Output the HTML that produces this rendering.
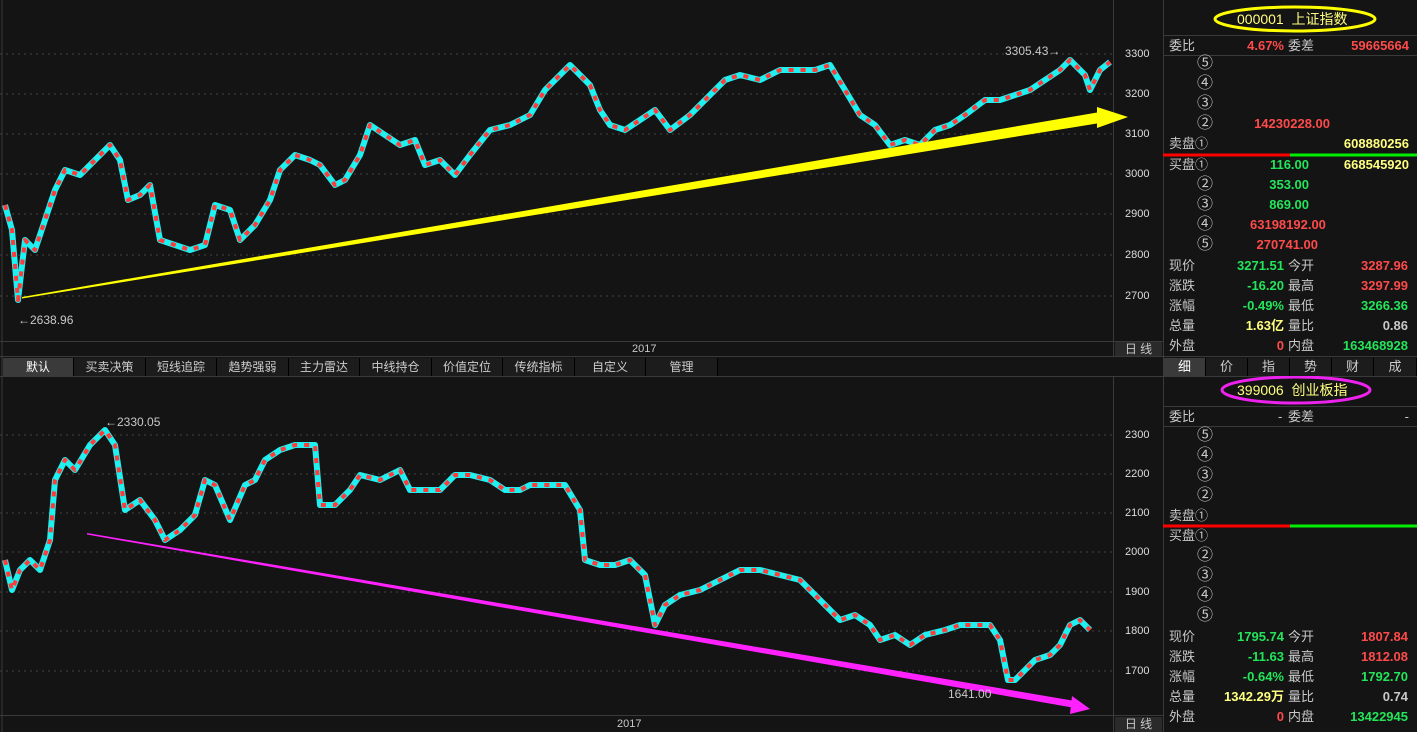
<!DOCTYPE html>
<html><head><meta charset="utf-8"><style>
*{margin:0;padding:0;box-sizing:border-box}
body{width:1417px;height:732px;background:#141414;overflow:hidden;position:relative;font-family:"Liberation Sans","Noto Sans CJK SC",sans-serif;font-size:13px;color:#c8c8c8}
.a{position:absolute;white-space:nowrap;line-height:16px}
.c{font-size:16px;line-height:18px;margin-top:-1px}
.r{color:#ff4a4a}.g{color:#22e55a}.y{color:#ffff80}.w{color:#c8c8c8}
.tab{position:absolute;top:358px;height:18px;line-height:18px;text-align:center;color:#ccc;border-right:1px solid #000;background:#1c1c1c;font-size:12px}
.rt{position:absolute;height:18px;line-height:18px;text-align:center;color:#ccc;border-right:1px solid #000;background:#1c1c1c;font-size:13px}
.ax{position:absolute;left:1125px;color:#ddd;font-size:11px;line-height:12px}
</style></head><body>
<svg width="1417" height="732" style="position:absolute;left:0;top:0">
<g stroke="#444" stroke-dasharray="2,4" stroke-width="1">
<line x1="0" y1="54" x2="1113" y2="54"/><line x1="0" y1="94" x2="1113" y2="94"/><line x1="0" y1="134" x2="1113" y2="134"/><line x1="0" y1="174" x2="1113" y2="174"/><line x1="0" y1="214" x2="1113" y2="214"/><line x1="0" y1="255" x2="1113" y2="255"/><line x1="0" y1="296" x2="1113" y2="296"/>
<line x1="0" y1="435" x2="1113" y2="435"/><line x1="0" y1="474" x2="1113" y2="474"/><line x1="0" y1="513" x2="1113" y2="513"/><line x1="0" y1="552" x2="1113" y2="552"/><line x1="0" y1="592" x2="1113" y2="592"/><line x1="0" y1="631" x2="1113" y2="631"/><line x1="0" y1="671" x2="1113" y2="671"/>
</g>
<g stroke="#3a3a3a" stroke-width="1" fill="none">
<line x1="2" y1="0" x2="2" y2="732"/>
<line x1="1113.5" y1="0" x2="1113.5" y2="356"/><line x1="1113.5" y1="377" x2="1113.5" y2="732"/>
<line x1="1163.5" y1="0" x2="1163.5" y2="732"/>
<line x1="0" y1="341.5" x2="1163" y2="341.5"/><line x1="0" y1="356.5" x2="1417" y2="356.5"/><line x1="0" y1="376.5" x2="1417" y2="376.5"/>
<line x1="0" y1="715.5" x2="1163" y2="715.5"/>
<line x1="1163" y1="35.5" x2="1417" y2="35.5"/><line x1="1163" y1="55.5" x2="1417" y2="55.5"/><line x1="1163" y1="406.5" x2="1417" y2="406.5"/><line x1="1163" y1="426.5" x2="1417" y2="426.5"/>
</g>
<g fill="none" stroke-linejoin="round">
<polyline stroke="#20f0f0" stroke-width="6" points="5,205 12,230 18,300 25,240 35,250 45,220 55,190 65,170 80,175 95,160 110,145 120,160 128,200 140,195 150,185 160,240 175,245 190,250 205,245 215,205 230,210 240,240 255,225 270,200 280,170 295,155 310,160 320,165 335,185 345,180 360,155 370,125 385,135 400,145 415,140 425,165 440,160 455,175 470,155 490,130 510,125 530,115 545,90 560,75 570,65 580,75 590,85 600,110 610,125 625,130 640,120 655,110 670,130 690,115 710,95 725,80 740,75 760,80 780,70 800,70 815,70 830,65 845,90 860,115 875,125 890,145 905,140 920,145 935,130 950,125 965,115 985,100 1000,100 1015,95 1030,90 1045,80 1060,70 1070,60 1085,75 1090,90 1100,70 1110,62"/>
<polyline stroke="#ff3a3a" stroke-width="4" stroke-dasharray="5,7" points="5,205 12,230 18,300 25,240 35,250 45,220 55,190 65,170 80,175 95,160 110,145 120,160 128,200 140,195 150,185 160,240 175,245 190,250 205,245 215,205 230,210 240,240 255,225 270,200 280,170 295,155 310,160 320,165 335,185 345,180 360,155 370,125 385,135 400,145 415,140 425,165 440,160 455,175 470,155 490,130 510,125 530,115 545,90 560,75 570,65 580,75 590,85 600,110 610,125 625,130 640,120 655,110 670,130 690,115 710,95 725,80 740,75 760,80 780,70 800,70 815,70 830,65 845,90 860,115 875,125 890,145 905,140 920,145 935,130 950,125 965,115 985,100 1000,100 1015,95 1030,90 1045,80 1060,70 1070,60 1085,75 1090,90 1100,70 1110,62"/>
<polyline stroke="#20f0f0" stroke-width="6" points="5,560 12,590 20,570 30,560 40,570 50,540 55,480 65,460 75,470 90,445 105,430 115,445 125,510 140,500 155,520 165,540 180,530 195,515 205,480 215,485 230,520 245,485 255,480 265,460 280,450 295,445 315,445 320,505 335,505 350,490 360,475 380,480 400,470 410,490 425,490 440,490 455,475 470,475 490,480 505,490 520,490 530,485 545,485 565,485 580,510 585,560 600,565 615,565 630,560 645,575 655,625 665,605 680,595 700,590 720,580 740,570 760,570 780,575 800,580 810,590 825,605 840,620 855,615 870,625 880,640 895,635 910,645 925,635 945,630 960,625 975,625 990,625 1000,640 1008,680 1015,680 1025,670 1035,660 1050,655 1060,645 1070,625 1080,620 1090,630"/>
<polyline stroke="#ff3a3a" stroke-width="4" stroke-dasharray="5,7" points="5,560 12,590 20,570 30,560 40,570 50,540 55,480 65,460 75,470 90,445 105,430 115,445 125,510 140,500 155,520 165,540 180,530 195,515 205,480 215,485 230,520 245,485 255,480 265,460 280,450 295,445 315,445 320,505 335,505 350,490 360,475 380,480 400,470 410,490 425,490 440,490 455,475 470,475 490,480 505,490 520,490 530,485 545,485 565,485 580,510 585,560 600,565 615,565 630,560 645,575 655,625 665,605 680,595 700,590 720,580 740,570 760,570 780,575 800,580 810,590 825,605 840,620 855,615 870,625 880,640 895,635 910,645 925,635 945,630 960,625 975,625 990,625 1000,640 1008,680 1015,680 1025,670 1035,660 1050,655 1060,645 1070,625 1080,620 1090,630"/>
</g>
<polygon fill="#ffff00" points="22,297 1100,112 1100,123 22,298.5"/>
<polygon fill="#ffff00" points="1097,107 1128,117 1097,128"/>
<polygon fill="#ff22ff" points="87,533 1075,701 1075,708 87,534.5"/>
<polygon fill="#ff22ff" points="1072,696 1090,709 1070,714"/>
<line x1="1163" y1="155" x2="1290" y2="155" stroke="#ff0000" stroke-width="3"/><line x1="1290" y1="155" x2="1417" y2="155" stroke="#00ee00" stroke-width="3"/>
<line x1="1163" y1="526" x2="1290" y2="526" stroke="#ff0000" stroke-width="3"/><line x1="1290" y1="526" x2="1417" y2="526" stroke="#00ee00" stroke-width="3"/>
<ellipse cx="1295" cy="19" rx="80" ry="12" fill="none" stroke="#ffff00" stroke-width="3"/>
<ellipse cx="1296" cy="390" rx="74" ry="13" fill="none" stroke="#ee22ee" stroke-width="3"/>
</svg>
<div class="a w" style="left:1005px;top:43px;font-size:12px">3305.43→</div>
<div class="a w" style="left:18px;top:312px;font-size:12px">←2638.96</div>
<div class="a w" style="left:105px;top:414px;font-size:12px">←2330.05</div>
<div class="a w" style="left:948px;top:686px;font-size:12px">1641.00</div>
<div class="ax" style="top:48px">3300</div><div class="ax" style="top:88px">3200</div><div class="ax" style="top:128px">3100</div><div class="ax" style="top:168px">3000</div><div class="ax" style="top:208px">2900</div><div class="ax" style="top:249px">2800</div><div class="ax" style="top:290px">2700</div>
<div class="ax" style="top:429px">2300</div><div class="ax" style="top:468px">2200</div><div class="ax" style="top:507px">2100</div><div class="ax" style="top:546px">2000</div><div class="ax" style="top:586px">1900</div><div class="ax" style="top:625px">1800</div><div class="ax" style="top:665px">1700</div>
<div class="a" style="left:632px;top:342px;font-size:11px;line-height:14px">2017</div>
<div class="a" style="left:617px;top:716px;font-size:11px;line-height:16px">2017</div>
<div class="a" style="left:1115px;top:342px;width:47px;height:14px;background:#2a2a2a;font-size:12px;line-height:14px;text-align:center">日 线</div>
<div class="a" style="left:1115px;top:717px;width:47px;height:15px;background:#2a2a2a;font-size:12px;line-height:15px;text-align:center">日 线</div>
<div class="tab" style="left:3px;width:71px;background:#3a3a3a;color:#fff">默认</div>
<div class="tab" style="left:74px;width:72px">买卖决策</div><div class="tab" style="left:146px;width:71px">短线追踪</div><div class="tab" style="left:217px;width:72px">趋势强弱</div><div class="tab" style="left:289px;width:71px">主力雷达</div><div class="tab" style="left:360px;width:72px">中线持仓</div><div class="tab" style="left:432px;width:71px">价值定位</div><div class="tab" style="left:503px;width:72px">传统指标</div><div class="tab" style="left:575px;width:71px">自定义</div><div class="tab" style="left:646px;width:72px">管理</div>
<div class="rt" style="left:1164px;top:358px;width:42px;background:#3a3a3a;color:#fff">细</div><div class="rt" style="left:1206px;top:358px;width:42px">价</div><div class="rt" style="left:1248px;top:358px;width:42px">指</div><div class="rt" style="left:1290px;top:358px;width:42px">势</div><div class="rt" style="left:1332px;top:358px;width:42px">财</div><div class="rt" style="left:1374px;top:358px;width:43px">成</div>
<div class="a y" style="left:1237px;top:11px;font-size:14px">000001&nbsp;&nbsp;上证指数</div>
<div class="a y" style="left:1237px;top:382px;font-size:14px">399006&nbsp;&nbsp;创业板指</div>
<!-- top panel -->
<div class="a" style="left:1169px;top:38px">委比</div><div class="a r" style="right:133px;top:38px;font-weight:bold">4.67%</div><div class="a" style="left:1288px;top:38px">委差</div><div class="a r" style="right:8px;top:38px;font-weight:bold">59665664</div>
<div class="a c" style="left:1197px;top:56px">⑤</div><div class="a c" style="left:1197px;top:76px">④</div><div class="a c" style="left:1197px;top:96px">③</div><div class="a c" style="left:1197px;top:116px">②</div>
<div class="a r" style="right:87px;top:116px;font-weight:bold">14230228.00</div>
<div class="a" style="left:1169px;top:136px">卖盘①</div><div class="a y" style="right:8px;top:136px;font-weight:bold">608880256</div>
<div class="a" style="left:1169px;top:157px">买盘①</div><div class="a g" style="right:108px;top:157px;font-weight:bold">116.00</div><div class="a y" style="right:8px;top:157px;font-weight:bold">668545920</div>
<div class="a c" style="left:1197px;top:177px">②</div><div class="a g" style="right:108px;top:177px;font-weight:bold">353.00</div>
<div class="a c" style="left:1197px;top:197px">③</div><div class="a g" style="right:108px;top:197px;font-weight:bold">869.00</div>
<div class="a c" style="left:1197px;top:217px">④</div><div class="a r" style="left:1250px;top:217px;width:80px;overflow:hidden;font-weight:bold">63198192.00</div>
<div class="a c" style="left:1197px;top:237px">⑤</div><div class="a r" style="right:99px;top:237px;font-weight:bold">270741.00</div>
<div class="a" style="left:1169px;top:258px">现价</div><div class="a g" style="right:133px;top:258px;font-weight:bold">3271.51</div><div class="a" style="left:1288px;top:258px">今开</div><div class="a r" style="right:9px;top:258px;font-weight:bold">3287.96</div>
<div class="a" style="left:1169px;top:278px">涨跌</div><div class="a g" style="right:133px;top:278px;font-weight:bold">-16.20</div><div class="a" style="left:1288px;top:278px">最高</div><div class="a r" style="right:9px;top:278px;font-weight:bold">3297.99</div>
<div class="a" style="left:1169px;top:298px">涨幅</div><div class="a g" style="right:133px;top:298px;font-weight:bold">-0.49%</div><div class="a" style="left:1288px;top:298px">最低</div><div class="a g" style="right:9px;top:298px;font-weight:bold">3266.36</div>
<div class="a" style="left:1169px;top:318px">总量</div><div class="a y" style="right:133px;top:318px;font-weight:bold">1.63亿</div><div class="a" style="left:1288px;top:318px">量比</div><div class="a w" style="right:9px;top:318px;font-weight:bold">0.86</div>
<div class="a" style="left:1169px;top:338px">外盘</div><div class="a r" style="right:133px;top:338px;font-weight:bold">0</div><div class="a" style="left:1288px;top:338px">内盘</div><div class="a g" style="right:9px;top:338px;font-weight:bold">163468928</div>
<!-- bottom panel -->
<div class="a" style="left:1169px;top:409px">委比</div><div class="a" style="left:1278px;top:409px">-</div><div class="a" style="left:1288px;top:409px">委差</div><div class="a" style="right:8px;top:409px">-</div>
<div class="a c" style="left:1197px;top:428px">⑤</div><div class="a c" style="left:1197px;top:448px">④</div><div class="a c" style="left:1197px;top:468px">③</div><div class="a c" style="left:1197px;top:488px">②</div>
<div class="a" style="left:1169px;top:508px">卖盘①</div><div class="a" style="left:1169px;top:528px">买盘①</div>
<div class="a c" style="left:1197px;top:548px">②</div><div class="a c" style="left:1197px;top:568px">③</div><div class="a c" style="left:1197px;top:588px">④</div><div class="a c" style="left:1197px;top:608px">⑤</div>
<div class="a" style="left:1169px;top:629px">现价</div><div class="a g" style="right:133px;top:629px;font-weight:bold">1795.74</div><div class="a" style="left:1288px;top:629px">今开</div><div class="a r" style="right:9px;top:629px;font-weight:bold">1807.84</div>
<div class="a" style="left:1169px;top:649px">涨跌</div><div class="a g" style="right:133px;top:649px;font-weight:bold">-11.63</div><div class="a" style="left:1288px;top:649px">最高</div><div class="a r" style="right:9px;top:649px;font-weight:bold">1812.08</div>
<div class="a" style="left:1169px;top:669px">涨幅</div><div class="a g" style="right:133px;top:669px;font-weight:bold">-0.64%</div><div class="a" style="left:1288px;top:669px">最低</div><div class="a g" style="right:9px;top:669px;font-weight:bold">1792.70</div>
<div class="a" style="left:1169px;top:689px">总量</div><div class="a y" style="right:133px;top:689px;font-weight:bold">1342.29万</div><div class="a" style="left:1288px;top:689px">量比</div><div class="a w" style="right:9px;top:689px;font-weight:bold">0.74</div>
<div class="a" style="left:1169px;top:709px">外盘</div><div class="a r" style="right:133px;top:709px;font-weight:bold">0</div><div class="a" style="left:1288px;top:709px">内盘</div><div class="a g" style="right:9px;top:709px;font-weight:bold">13422945</div>
</body></html>
